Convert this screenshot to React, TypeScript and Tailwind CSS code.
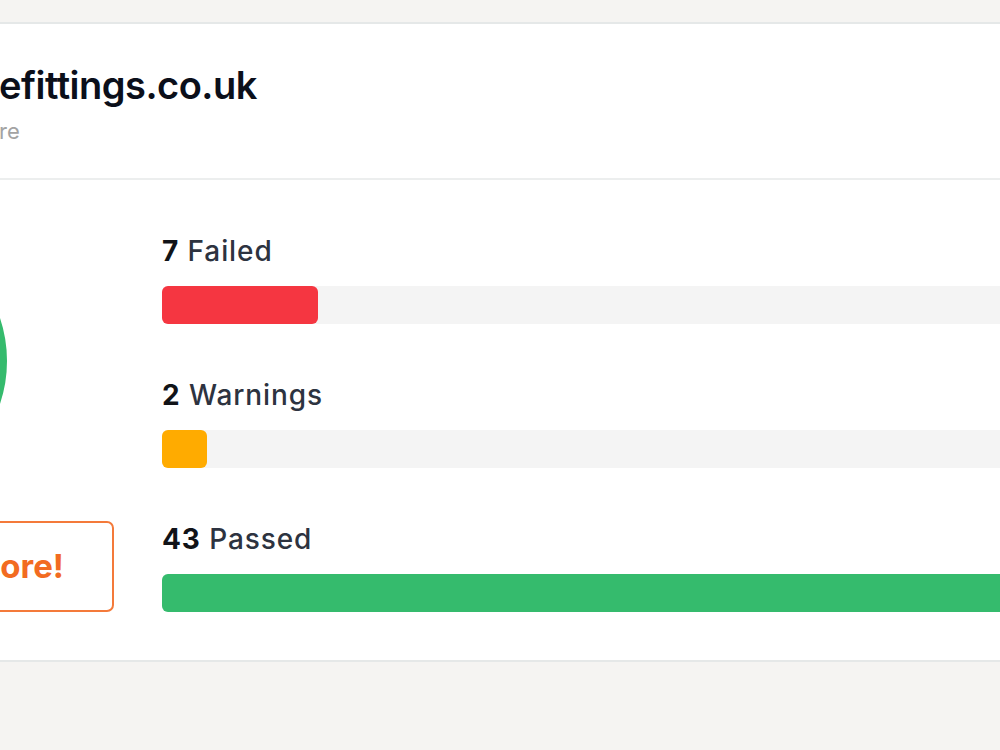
const results = [
  { count: 7, label: "Failed", color: "bg-[#f53641]" },
  { count: 2, label: "Warnings", color: "bg-[#ffab00]" },
  { count: 43, label: "Passed", color: "bg-[#35bb6d]" },
];

const total = results.reduce((sum, r) => sum + r.count, 0);

function ScoreRing() {
  return (
    <svg width="280" height="280" viewBox="0 0 280 280" className="-ml-[268px] shrink-0">
      <circle cx="140" cy="140" r="127" fill="none" stroke="#35bb6d" strokeWidth="16" />
    </svg>
  );
}

export default function App() {
  return (
    <div
      className="w-[1000px] h-[750px] overflow-hidden bg-[#f5f4f2] pt-[22px]"
      style={{ fontFamily: "Inter, 'Noto Sans', sans-serif" }}
    >
      <div className="w-[1400px] bg-white border-y-2 border-[#e5e8e8]">
        {/* header */}
        <div className="pt-[38px] pb-[32px] -ml-[1px] border-b-2 border-[#eceeee]">
          <h1 className="text-[38px] leading-[46px] font-semibold text-[#0b0f1a] tracking-[-0.5px]">
            efittings.co.uk
          </h1>
          <p className="mt-[8px] text-[22px] leading-[30px] text-[#a3a3a3]">re</p>
        </div>

        {/* body */}
        <div className="flex gap-[48px] pt-[53px] pb-[48px]">
          <div className="w-[114px] shrink-0 flex flex-col">
            <div className="mt-[-12px]">
              <ScoreRing />
            </div>
            <button className="mt-[20px] -ml-[150px] w-[264px] h-[91px] rounded-[7px] border-2 border-[#f47a3a] flex items-center justify-end pr-[48px] text-[33px] font-bold text-[#f26b21]">
              ore!
            </button>
          </div>

          <div className="w-[1160px] flex flex-col gap-[53px]">
            {results.map((r) => (
              <div key={r.label}>
                <div className="text-[28px] leading-[36px] font-medium tracking-[0.9px] text-[#2d3340]">
                  <span className="font-bold text-[#111318]">{r.count}</span> {r.label}
                </div>
                <div className="mt-[17px] h-[38px] rounded-[6px] bg-[#f4f4f4]">
                  <div
                    className={`h-full rounded-[6px] ${r.color}`}
                    style={{ width: `${(r.count / total) * 100}%` }}
                  />
                </div>
              </div>
            ))}
          </div>
        </div>
      </div>
    </div>
  );
}
